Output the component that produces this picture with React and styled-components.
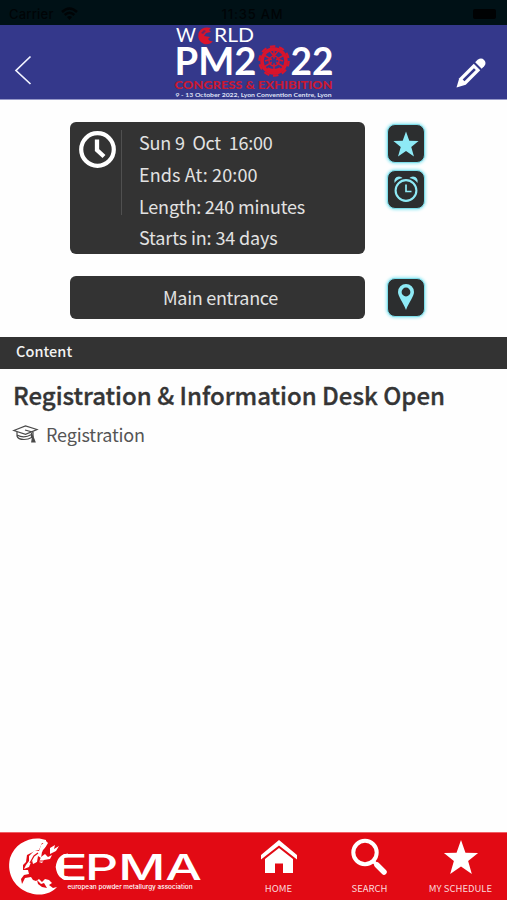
import React from 'react';
import styled, { createGlobalStyle } from 'styled-components';

const GlobalStyle = createGlobalStyle`
  * {
    box-sizing: border-box;
  }

  body {
    margin: 0;
    background: #fefefe;
    font-family: "Noto Sans CJK SC", "Open Sans", sans-serif;
  }

  svg {
    display: block;
    flex: none;
    overflow: visible;
  }
`;

const Screen = styled.div`
  display: flex;
  flex-direction: column;
  width: 507px;
  height: 900px;
  overflow: hidden;
`;

const StatusBar = styled.div`
  display: grid;
  grid-template-columns: 1fr 1fr 1fr;
  align-items: center;
  flex: none;
  height: 25px;
  padding: 3px 11px 0 9px;
  background: #001116;
  color: #000406;
  font: 500 13px/16px Inter, sans-serif;
`;

const Carrier = styled.div`
  display: flex;
  align-items: center;
  gap: 7px;
  letter-spacing: 0.2px;
`;

const Clock = styled.div`
  text-align: center;
  white-space: nowrap;
  font-weight: 500;
  letter-spacing: 0.8px;
`;

const Battery = styled.div`
  justify-self: end;
  width: 23px;
  height: 10px;
  border-radius: 2px;
  background: #000203;
`;

const Header = styled.header`
  display: flex;
  align-items: flex-start;
  justify-content: space-between;
  flex: none;
  height: 75px;
  padding: 0 20px 0 14px;
  border-bottom: 1px solid #9698c8;
  background: #34388b;
`;

const HeaderButton = styled.button`
  width: ${props => props.$width}px;
  margin: 30px 0 0;
  padding: 0;
  border: 0;
  background: none;
`;

const Details = styled.section`
  display: flex;
  flex-direction: column;
  gap: 22px;
  flex: none;
  height: 237px;
  padding: 22px 0 0 70px;
`;

const DetailRow = styled.div`
  display: flex;
  gap: 22px;
`;

const Panel = styled.div`
  display: flex;
  width: 295px;
  height: ${props => props.$height}px;
  border-radius: 6px;
  background: #333;
  color: #e2e2e2;
  font-size: 18px;
`;

const TimePanel = styled(Panel)`
  padding: 8px 0 0 8px;
`;

const PlacePanel = styled(Panel)`
  align-items: center;
  justify-content: center;
  padding: 0 0 2px 6px;
  letter-spacing: ${props => props.$spacing}px;
`;

const Divider = styled.div`
  width: 1px;
  height: 85px;
  margin: 0 17px 0 5px;
  background: #505050;
`;

const TimeLines = styled.div`
  margin-top: -2.6px;
`;

const TimeLine = styled.div`
  height: 31.7px;
  line-height: 31px;
  white-space: pre;
  letter-spacing: ${props => props.$spacing}px;
`;

const Actions = styled.div`
  display: flex;
  flex-direction: column;
  gap: 7px;
  padding-top: 2px;
`;

const ActionButton = styled.button`
  display: flex;
  align-items: center;
  justify-content: center;
  width: 38px;
  height: 39px;
  padding: 0;
  border: 1px solid #7fdfeb;
  border-radius: 8px;
  background: #2c2e2f;
  box-shadow: 0 0 3px 1px #9ceaf4;
`;

const SectionBar = styled.div`
  flex: none;
  height: 32px;
  padding-left: 16px;
  background: #333;
  color: #f2f2f2;
  font-size: 14.5px;
  font-weight: 500;
  line-height: 27px;
  letter-spacing: ${props => props.$spacing}px;
`;

const Content = styled.main`
  flex: 1;
  padding: 8px 13px;
  color: #353535;
`;

const Title = styled.h1`
  margin: 0;
  font-size: 24px;
  font-weight: 500;
  line-height: 36px;
  white-space: nowrap;
  letter-spacing: ${props => props.$spacing}px;
  -webkit-text-stroke: 0.35px #353535;
`;

const Category = styled.div`
  display: flex;
  align-items: center;
  gap: 8px;
  margin-top: 4px;
  color: #555;
  font-size: 18px;
  line-height: 34px;
  letter-spacing: ${props => props.$spacing}px;
`;

const Footer = styled.footer`
  display: flex;
  flex: none;
  height: 68px;
  padding-left: 6px;
  border-top: 1px solid #ef5f65;
  background: #e20a14;
`;

const Nav = styled.nav`
  display: flex;
  margin-left: 30px;
`;

const NavItem = styled.a`
  display: flex;
  flex-direction: column;
  align-items: center;
  width: 91px;
  padding-top: 5px;
  color: #fbd9da;
  font-size: 9.5px;
  line-height: 14px;
  letter-spacing: ${props => props.$spacing}px;
  white-space: nowrap;

  svg {
    margin-bottom: 5px;
  }
`;

const starPoints = '20,1 24.7,14.4 38,14.7 27.5,23.2 31.4,37 20,29 8.6,37 12.5,23.2 2,14.7 15.3,14.4';

const WifiIcon = () => (
  <svg width="17" height="14" viewBox="0 0 17 14" fill="none" stroke="#000406" strokeWidth="2.4">
    <path d="M1 5Q8.5 -2 16 5M3.7 8Q8.5 3.5 13.3 8" />
    <path d="M6 10Q8.5 7.8 11 10L8.5 13Z" fill="#000406" stroke="none" />
  </svg>
);

const BackIcon = () => (
  <svg width="20" height="30" viewBox="0 0 20 30">
    <path d="M16.5 1.5L2 15.5L16.5 29" fill="none" stroke="#f2f4ff" strokeWidth="1.7" />
  </svg>
);

const PencilIcon = () => (
  <svg width="32" height="32" viewBox="0 0 32 32">
    <g transform="translate(1.5 32.5) rotate(-45)">
      <path d="M0 0L8.5 -4.6H29V4.6H8.5Z" fill="#fff" />
      <path d="M31 -4.6H34.5Q39 -4 39 0Q39 4 34.5 4.6H31Z" fill="#fff" />
      <path d="M10 -1.3H26V1.3H10Z" fill="#34388b" />
    </g>
  </svg>
);

const CongressLogo = () => (
  <svg width="162" height="74" viewBox="0 0 162 74" fontFamily="Lato, sans-serif">
    <g fill="#fff">
      <text x="3" y="17" fontSize="20" textLength="20" lengthAdjust="spacingAndGlyphs">W</text>
      <text x="41" y="17" fontSize="20" textLength="40" lengthAdjust="spacingAndGlyphs">RLD</text>
      <text x="1.5" y="49.5" fontSize="38" fontWeight="700" textLength="82" lengthAdjust="spacingAndGlyphs">PM2</text>
      <text x="117.5" y="49.5" fontSize="38" fontWeight="700" textLength="43" lengthAdjust="spacingAndGlyphs">22</text>
    </g>
    <path d="M38 3Q29 1 25.5 8Q24 16 31 19Q37 20 40 16Q37 17 35 14L37 12L31 11L33 8L38 7L36 5Z" fill="#da142b" />
    <path d="M28 8L31 5L33 6L30 9Z" fill="#6b2562" />
    <g fill="none" stroke="#d8142c">
      <circle cx="101" cy="36" r="12" strokeWidth="3.5" />
      <circle cx="101" cy="36" r="14.7" strokeWidth="2.2" strokeDasharray="5.5 3.74" />
      <path d="M101 25V46M91 30L111 42M91 42L111 30M96 25L101 31L106 25M92 36L98 34M110 36L104 34" strokeWidth="1.5" />
      <circle cx="101" cy="36" r="5" strokeWidth="1.3" />
      <path d="M94 44Q101 48 108 44" strokeWidth="4" />
    </g>
    <circle cx="101" cy="36" r="2.5" fill="#34388b" />
    <text x="1.5" y="63.5" fill="#c91832" fontSize="11" fontWeight="900" textLength="158" lengthAdjust="spacingAndGlyphs">CONGRESS &amp; EXHIBITION</text>
    <text x="2.5" y="71.5" fill="#dfe0f4" fontSize="6.4" fontWeight="700" textLength="156" lengthAdjust="spacingAndGlyphs">9 - 13 October 2022, Lyon Convention Centre, Lyon</text>
  </svg>
);

const TimeIcon = () => (
  <svg width="38" height="38" viewBox="0 0 38 38" fill="none" stroke="#fff">
    <circle cx="19.5" cy="19.5" r="16.3" strokeWidth="4.2" />
    <path d="M19 9.5V20L26 26.5" strokeWidth="4.3" />
  </svg>
);

const StarIcon = ({ size, color }) => (
  <svg width={size} height={size} viewBox="0 0 40 38">
    <polygon points={starPoints} fill={color} />
  </svg>
);

const AlarmIcon = () => (
  <svg width="28" height="30" viewBox="0 0 28 30" fill="none" stroke="#8eeaf6">
    <circle cx="14" cy="15.5" r="10.4" strokeWidth="2.1" />
    <path d="M14 9.5V16.5H19.5" strokeWidth="1.7" />
    <path d="M2.5 8Q1.5 2 7 1.5Q9.5 1.5 10.5 3Q5 4 2.5 8Z" fill="#8eeaf6" stroke="none" />
    <path d="M25.5 8Q26.5 2 21 1.5Q18.5 1.5 17.5 3Q23 4 25.5 8Z" fill="#8eeaf6" stroke="none" />
  </svg>
);

const PinIcon = () => (
  <svg width="18" height="28" viewBox="0 0 18 28">
    <path d="M9 0A8 8 0 0 0 1 8C1 12.5 6 18 9 26C12 18 17 12.5 17 8A8 8 0 0 0 9 0ZM9 3.6A4.4 4.4 0 1 1 9 12.4A4.4 4.4 0 0 1 9 3.6Z" fill="#8eeaf6" fillRule="evenodd" />
  </svg>
);

const GraduationIcon = () => (
  <svg width="25" height="18" viewBox="0 0 25 18" fill="none" stroke="#494949" strokeWidth="1.2">
    <path d="M.8 5.5L12.5 1L24 4.5L12.5 9.4Z" />
    <path d="M4 7V11Q5 14.5 11 14.5Q15.5 14.5 18.5 12.5V8M4 10Q11 14 18.5 9.5M12 5L20 7.2V12" />
    <path d="M19.7 11L22 17H18.8Z" fill="#494949" />
  </svg>
);

const EpmaLogo = () => (
  <svg width="197" height="66" viewBox="0 0 197 66" fill="#fff">
    <path d="M40 7C27 2 9 9 4 25C0 42 10 56 24 60C35 64 46 60 51 54L47 55L43 52L46 50L43 47L39 46L36 49L33 46L30 48L27 47L25 44L19 45L16 51L15 46L18 42L23 41L22 37L17 37L17 32L20 29L21 22L25 20L29 18L33 17L36 10L40 10Z" />
    <path d="M40 8L42 10L39 15L36 19L35 25L32 23L31 29L27 31L26 27L23 34L18 36L20 32L23 28L23 23L28 18L33 18L35 12Z" />
    <path d="M35 24L39 21L42 24L46 22L44 26L38 27L36 30L33 29ZM44 15L49 12L48 16L53 13L50 18L44 21Z" />
    <path d="M31 47L35 51L38 50L41 55L36 54L32 51ZM49 52L53 49L51 54Z" fill="#e20a14" />
    <path d="M24 30L28 23L32 20M37 18L42 13M27 34L33 28L38 28" fill="none" stroke="#e20a14" strokeWidth="1.2" />
    <g fontFamily="Inter, sans-serif">
      <text x="79" y="47" fontSize="36" fontWeight="500" textLength="117" lengthAdjust="spacingAndGlyphs">PMA</text>
      <text x="47" y="47" fontSize="36" fontWeight="500" textLength="35" lengthAdjust="spacingAndGlyphs">E</text>
      <text x="61.5" y="55.5" fontSize="6.3" fontWeight="500" textLength="125" lengthAdjust="spacingAndGlyphs">european powder metallurgy association</text>
    </g>
    {/* rounds the left side of the E */}
    <path d="M49 20H60Q52 23 51 34Q52 45 60 48H49Z" fill="#e20a14" />
    <path d="M62 22.3Q53 23 51.5 34Q53 45 62 45.2" fill="none" stroke="#fff" strokeWidth="3.6" />
  </svg>
);

const HomeIcon = () => (
  <svg width="38" height="38" viewBox="0 0 38 38" fill="#fff">
    <path d="M19 2L37 17V21.5L19 7.5L1 21.5V17Z" />
    <path d="M19 10L33 21V35H23V25.5H15V35H5V21Z" />
  </svg>
);

const SearchIcon = () => (
  <svg width="38" height="38" viewBox="0 0 38 38" fill="none" stroke="#fff">
    <circle cx="14" cy="14.5" r="11.7" strokeWidth="4" />
    <path d="M22 23L26 27" strokeWidth="3.5" />
    <path d="M26 27L33 34" strokeWidth="5.5" strokeLinecap="round" />
  </svg>
);

const App = () => {
  return (
    <Screen>
      <GlobalStyle />
      <StatusBar>
        <Carrier>Carrier <WifiIcon /></Carrier>
        <Clock>11:35 AM</Clock>
        <Battery />
      </StatusBar>
      <Header>
        <HeaderButton $width={38}><BackIcon /></HeaderButton>
        <CongressLogo />
        <HeaderButton $width={32}><PencilIcon /></HeaderButton>
      </Header>
      <Details>
        <DetailRow>
          <TimePanel $height={132}>
            <TimeIcon />
            <Divider />
            <TimeLines>
              <TimeLine $spacing={-0.19}>Sun 9  Oct  16:00</TimeLine>
              <TimeLine $spacing={0.12}>Ends At: 20:00</TimeLine>
              <TimeLine $spacing={-0.2}>Length: 240 minutes</TimeLine>
              <TimeLine $spacing={-0.12}>Starts in: 34 days</TimeLine>
            </TimeLines>
          </TimePanel>
          <Actions>
            <ActionButton><StarIcon size={28} color="#8eeaf6" /></ActionButton>
            <ActionButton><AlarmIcon /></ActionButton>
          </Actions>
        </DetailRow>
        <DetailRow>
          <PlacePanel $height={43} $spacing={-0.3}>Main entrance</PlacePanel>
          <Actions>
            <ActionButton><PinIcon /></ActionButton>
          </Actions>
        </DetailRow>
      </Details>
      <SectionBar $spacing={0.05}>Content</SectionBar>
      <Content>
        <Title $spacing={0}>Registration &amp; Information Desk Open</Title>
        <Category $spacing={-0.17}><GraduationIcon />Registration</Category>
      </Content>
      <Footer>
        <EpmaLogo />
        <Nav>
          <NavItem $spacing={0}><HomeIcon />HOME</NavItem>
          <NavItem $spacing={0}><SearchIcon />SEARCH</NavItem>
          <NavItem $spacing={0}><StarIcon size={38} color="#fff" />MY SCHEDULE</NavItem>
        </Nav>
      </Footer>
    </Screen>
  );
};

export default App;
